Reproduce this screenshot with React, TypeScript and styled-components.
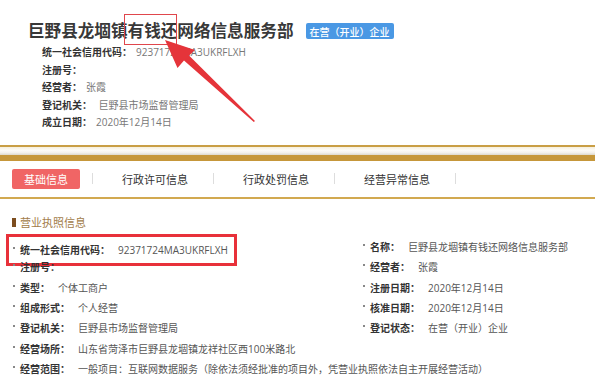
import { Fragment } from 'react'
import styled, { createGlobalStyle } from 'styled-components'

const GlobalStyle = createGlobalStyle`
  html, body {
    margin: 0;
    padding: 0;
    background: #fff;
  }
  body {
    font-family: "Open Sans", "Noto Sans CJK SC", sans-serif;
    color: #333;
  }
`;

const Page = styled.div`
  position: relative;
  width: 595px;
  height: 387px;
  overflow: hidden;
  background: #fff;
`;

const Header = styled.div`
  padding: 18px 0 0 28px;
`;

const TitleRow = styled.div`
  display: flex;
  align-items: center;
  gap: 12px;
`;

const Title = styled.h1`
  margin: 0;
  font-size: 16.6px;
  line-height: 26px;
  font-weight: 700;
  color: #383838;
`;

const Marked = styled.span`
  position: relative;
  &::after {
    content: '';
    position: absolute;
    left: -4px;
    right: 0;
    top: -5px;
    bottom: -3px;
    border: 1px solid #e0464c;
  }
`;

const Badge = styled.span`
  display: inline-flex;
  align-items: center;
  height: 16px;
  padding: 0 4px;
  border-radius: 2px;
  background: #4a98e4;
  color: #fff;
  font-size: 10px;
  font-weight: 500;
`;

const InfoList = styled.div`
  margin-left: 14px;
`;

const InfoRow = styled.div`
  font-size: 10px;
  line-height: 17.5px;
  white-space: nowrap;
`;

const InfoLabel = styled.span`
  font-weight: 700;
  color: #333;
  margin-right: 4px;
`;

const InfoValue = styled.span`
  color: #777;
`;

const GoldDivider = styled.div`
  margin-top: 13px;
  height: 8px;
  border-top: 2px solid #c99e45;
  border-bottom: 6px solid #c6973a;
  background: linear-gradient(#f6efdc, #fdfbf6 40%, #f3f1ec 70%, #ddd8cc);
`;

const TabBar = styled.div`
  display: flex;
  align-items: center;
  height: 36px;
  border-bottom: 2px solid #d2a950;
`;

const ActiveTab = styled.div`
  margin: 0 12px;
  width: 68px;
  height: 20px;
  display: flex;
  align-items: center;
  justify-content: center;
  border-radius: 2px;
  background: #f06565;
  color: #fff;
  font-size: 11px;
`;

const Separator = styled.span`
  width: 1px;
  height: 11px;
  background: #ddd;
`;

const Tab = styled.div`
  width: 120px;
  padding-left: 4px;
  box-sizing: border-box;
  text-align: center;
  font-size: 11px;
  color: #333;
`;

const Section = styled.div`
  padding-top: 16px;
`;

const SectionTitle = styled.div`
  display: flex;
  align-items: center;
  margin-left: 12px;
  font-size: 11px;
  line-height: 16px;
  color: #a27c4a;
  &::before {
    content: '';
    width: 4px;
    height: 9px;
    margin-right: 4px;
    background: #7c4d1f;
  }
`;

const Grid = styled.div`
  margin-top: 6px;
  padding-left: 13px;
  display: grid;
  grid-template-columns: 350px 1fr;
  grid-auto-rows: 20.3px;
  font-size: 10px;
`;

const Field = styled.div<{ $wide?: boolean; $marked?: boolean }>`
  display: flex;
  align-items: center;
  white-space: nowrap;
  grid-column: ${(p) => (p.$wide ? '1 / span 2' : 'auto')};
  ${(p) =>
    p.$marked
      ? `
    width: fit-content;
    height: 26px;
    margin: -3px 0 -3px -7px;
    padding: 0 6px 0 4px;
    border: 3px solid #e8313a;
  `
      : ''}
  &::before {
    content: '';
    width: 2px;
    height: 2px;
    margin: -3px 5px 0 0;
    background: #888;
  }
`;

const FieldLabel = styled.span`
  font-weight: 700;
  color: #333;
  margin-right: 8px;
`;

const FieldValue = styled.span`
  color: #555;
`;

const Overlay = styled.svg`
  position: absolute;
  left: 0;
  top: 0;
  pointer-events: none;
`;

const leftFields = [
  { label: '统一社会信用代码：', value: '92371724MA3UKRFLXH', marked: true },
  { label: '注册号：', value: '' },
  { label: '类型：', value: '个体工商户' },
  { label: '组成形式：', value: '个人经营' },
  { label: '登记机关：', value: '巨野县市场监督管理局' },
];

const rightFields = [
  { label: '名称：', value: '巨野县龙堌镇有钱还网络信息服务部' },
  { label: '经营者：', value: '张霞' },
  { label: '注册日期：', value: '2020年12月14日' },
  { label: '核准日期：', value: '2020年12月14日' },
  { label: '登记状态：', value: '在营（开业）企业' },
];

const tabs = ['行政许可信息', '行政处罚信息', '经营异常信息'];

function Arrow() {
  // annotation arrow: tip under the boxed chars, tail down to the right
  return (
    <Overlay width="595" height="387" viewBox="0 0 595 387">
      <polygon
        points="165,40 195,50 189,55.5 255,121 253.8,122 184,60.5 177.5,68"
        fill="#e5343a"
      />
    </Overlay>
  );
}

export default function App() {
  return (
    <Page>
      <GlobalStyle />
      <Header>
        <TitleRow>
          <Title>
            巨野县龙堌镇<Marked>有钱还</Marked>网络信息服务部
          </Title>
          <Badge>在营（开业）企业</Badge>
        </TitleRow>
        <InfoList>
          <InfoRow>
            <InfoLabel>统一社会信用代码：</InfoLabel>
            <InfoValue>92371724MA3UKRFLXH</InfoValue>
          </InfoRow>
          <InfoRow>
            <InfoLabel>注册号：</InfoLabel>
          </InfoRow>
          <InfoRow>
            <InfoLabel>经营者：</InfoLabel>
            <InfoValue>张霞</InfoValue>
          </InfoRow>
          <InfoRow>
            <InfoLabel>登记机关：</InfoLabel>
            <InfoValue>&nbsp;巨野县市场监督管理局</InfoValue>
          </InfoRow>
          <InfoRow>
            <InfoLabel>成立日期：</InfoLabel>
            <InfoValue>2020年12月14日</InfoValue>
          </InfoRow>
        </InfoList>
      </Header>

      <GoldDivider />

      <TabBar>
        <ActiveTab>基础信息</ActiveTab>
        <Separator />
        {tabs.map((t) => (
          <Fragment key={t}>
            <Tab>{t}</Tab>
            <Separator />
          </Fragment>
        ))}
      </TabBar>

      <Section>
        <SectionTitle>营业执照信息</SectionTitle>
        <Grid>
          {leftFields.map((f, i) => (
            <Fragment key={f.label}>
              <Field $marked={f.marked}>
                <FieldLabel>{f.label}</FieldLabel>
                <FieldValue>{f.value}</FieldValue>
              </Field>
              <Field>
                <FieldLabel>{rightFields[i].label}</FieldLabel>
                <FieldValue>{rightFields[i].value}</FieldValue>
              </Field>
            </Fragment>
          ))}
          <Field $wide>
            <FieldLabel>经营场所：</FieldLabel>
            <FieldValue>山东省菏泽市巨野县龙堌镇龙祥社区西100米路北</FieldValue>
          </Field>
          <Field $wide>
            <FieldLabel>经营范围：</FieldLabel>
            <FieldValue>
              一般项目：互联网数据服务（除依法须经批准的项目外，凭营业执照依法自主开展经营活动）
            </FieldValue>
          </Field>
        </Grid>
      </Section>

      <Arrow />
    </Page>
  );
}
